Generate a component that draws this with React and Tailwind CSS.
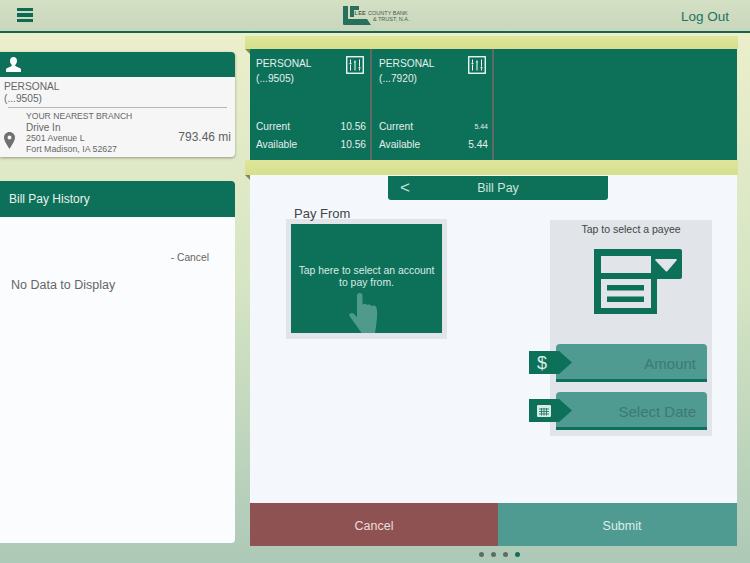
import React from 'react';

const sans = 'font-["Liberation_Sans",Arial,sans-serif]';

function FilterIcon() {
  return (
    <svg width="18" height="18" viewBox="0 0 18 18" fill="none" stroke="white">
      <rect x="0.75" y="0.75" width="16.5" height="16.5" strokeWidth="1.3" />
      <path d="M4.5 3.5v3M4.5 9v5.5M9 6.5v8M13.5 3.5v7M13.5 13v1.5" strokeWidth="1" />
      <circle cx="4.5" cy="7.6" r="1" fill="white" stroke="none" />
      <path d="M7.8 6.5 9 4l1.2 2.5z" fill="white" stroke="none" />
      <circle cx="13.5" cy="11.7" r="1" fill="white" stroke="none" />
    </svg>
  );
}

function AccountTile({ name, number, current, currentClass, available, className }) {
  return (
    <div className={`w-[122px] h-full border-r-2 border-[#5d6a66] flex flex-col pr-[4px] text-[#e4efeb] text-[10.2px] leading-[15px] ${className}`}>
      <div className="flex justify-between pt-[7px] pr-[2px] h-[76px]">
        <div>
          <div>{name}</div>
          <div>{number}</div>
        </div>
        <div><FilterIcon /></div>
      </div>
      <div className="flex justify-between items-center h-[18px] mt-[-8px]">
        <span>Current</span>
        <span className={currentClass}>{current}</span>
      </div>
      <div className="flex justify-between items-center h-[18px]">
        <span>Available</span>
        <span>{available}</span>
      </div>
    </div>
  );
}

function Band({ className }) {
  return (
    <div className={`relative bg-gradient-to-b from-[#dfe59b] to-[#d6e08c] ${className}`}>
      <div className="absolute left-0 top-full w-0 h-0 border-t-[5px] border-l-[5px] border-t-[#7d8a50] border-l-transparent" />
    </div>
  );
}

function FieldRow({ label, icon }) {
  return (
    <div className="flex items-center relative h-[39px] ml-[1px]">
      <div className="absolute z-10 left-[-27px] top-[8px] w-[43px] h-[23px] bg-[#0d7059] flex items-center pl-[8px] [clip-path:polygon(0_0,70%_0,100%_50%,70%_100%,0_100%)]">
        {icon}
      </div>
      <div className="relative w-[151px] h-[38px] bg-[#4f9a91] rounded-t-[4px] border-b-[3px] border-[#0d7059] flex items-center justify-end pr-[11px] pt-[7px] text-[15px] text-[#3c7a72]">
        {label}
      </div>
    </div>
  );
}

export default function App() {
  return (
    <div className={`w-[750px] h-[563px] overflow-hidden flex flex-col bg-gradient-to-b from-[#eef0cc] via-[#d6e5c4] to-[#adc9b7] ${sans}`}>
      {/* header */}
      <header className="h-[33px] shrink-0 border-b-2 border-[#17644f] bg-gradient-to-b from-[#d4e0c4] to-[#c8d6bb] flex items-center justify-between pl-[17px] pr-[21px]">
        <div className="w-[16px] flex flex-col gap-[2px] mt-[-1px]">
          <div className="h-[3.5px] bg-[#0d6a55]" />
          <div className="h-[3.5px] bg-[#0d6a55]" />
          <div className="h-[3.5px] bg-[#0d6a55]" />
        </div>
        <div className="relative w-[67px] h-[19px] ml-[38px] mt-[-1px]">
          <svg width="30" height="19" viewBox="0 0 30 19">
            <path d="M1 0h5v13h19l4 6H2q-1 0-1-1z" fill="#27705d" />
            <path d="M8 0h9v4H12v7H8z" fill="#27705d" />
          </svg>
          <div className="absolute left-[12px] top-[4px] text-[5.5px] leading-[7px] text-[#4a5a50] whitespace-nowrap">
            <span className="font-bold tracking-[0.3px]">LEE</span>
            <span className="ml-[2px]">COUNTY BANK</span>
          </div>
          <div className="absolute right-0 top-[10px] text-[5.5px] leading-[7px] text-[#4a5a50] whitespace-nowrap">&amp; TRUST, N.A.</div>
        </div>
        <span className="text-[13.5px] text-[#1c7560] mt-[3px]">Log Out</span>
      </header>

      <div className="flex flex-1 min-h-0">
        {/* left column */}
        <aside className="w-[235px] shrink-0 pt-[19px] flex flex-col">
          <div className="h-[105px] rounded-r-[4px] bg-[#f6f6f7] shadow-[0_1px_3px_rgba(0,0,0,0.35)] overflow-hidden text-[#666]">
            <div className="h-[25px] bg-[#0d7059] flex items-center pl-[6px]">
              <svg width="15" height="15" viewBox="0 0 15 15" fill="white">
                <path d="M7.5 0c2.4 0 3.6 1.8 3.5 4-.1 1.6-.8 3-1.6 3.8-.4.5-.2 1.2.4 1.5l3.8 1.7c.9.4 1.400 1 1.400 2V15H0v-2c0-1 .5-1.600 1.400-2l3.800-1.700c.6-.3.8-1 .4-1.500C4.800 7 4.100 5.600 4 4c-.1-2.200 1.100-4 3.500-4z" />
              </svg>
            </div>
            <div className="pl-[4px] pt-[4px] text-[10.2px] leading-[11.5px]">
              <div>PERSONAL</div>
              <div>(...9505)</div>
            </div>
            <div className="h-px bg-[#b5b5b5] ml-[8px] mr-[8px] mt-[3px]" />
            <div className="flex items-center pl-[4px] pr-[4px]">
              <svg width="11" height="17" viewBox="0 0 11 17" className="mt-[17px]">
                <path fillRule="evenodd" d="M5.5 0C8.5 0 11 2.4 11 5.5 11 9 7.5 13.500 5.500 17 3.500 13.500 0 9 0 5.500 0 2.400 2.500 0 5.500 0zm0 3.500a2 2 0 1 0 0 4 2 2 0 0 0 0-4z" fill="#707070" />
              </svg>
              <div className="ml-[11px] flex-1 pt-[3px]">
                <div className="text-[8.6px] leading-[11px]">YOUR NEAREST BRANCH</div>
                <div className="text-[10px] leading-[11px]">Drive In</div>
                <div className="text-[8.8px] leading-[11px]">2501 Avenue L</div>
                <div className="text-[8.8px] leading-[11px]">Fort Madison, IA 52627</div>
              </div>
              <div className="text-[12px] mt-[10px] text-[#5f5f5f]">793.46 mi</div>
            </div>
          </div>

          <div className="mt-[24px] h-[362px] rounded-r-[4px] bg-[#fbfcfd] overflow-hidden">
            <div className="h-[36px] bg-[#0d7059] flex items-center pl-[9px] text-[12px] text-[#e9f2ef]">
              Bill Pay History
            </div>
            <div className="pt-[34px] pr-[26px] text-right text-[10.3px] leading-[13px] text-[#666]">- Cancel</div>
            <div className="pl-[11px] pt-[14px] text-[12.5px] leading-[15px] text-[#666]">No Data to Display</div>
          </div>
        </aside>

        {/* right column */}
        <main className="ml-[10px] w-[493px] pt-[3px] flex flex-col">
          <Band className="h-[13px]" />
          <div className="ml-[5px] w-[487px] h-[111px] bg-[#0d7059] flex">
            <AccountTile className="pl-[6px]" name="PERSONAL" number="(...9505)" current="10.56" available="10.56" />
            <AccountTile className="pl-[7px]" name="PERSONAL" number="(...7920)" current="5.44" currentClass="text-[7px]" available="5.44" />
          </div>
          <Band className="h-[15px]" />
          <div className="ml-[5px] w-[487px] h-[328px] bg-[#f4f8fc] flex flex-col">
            <div className="ml-[138px] mt-[1px] w-[220px] h-[24px] bg-[#0d7059] rounded-b-[3px] flex items-center text-[#cfe4de] text-[12.5px]">
              <span className="pl-[12px] w-[40px] text-[17px] font-light">&lt;</span>
              <span className="flex-1 text-center pr-[40px]">Bill Pay</span>
            </div>
            <div className="w-full flex justify-between">
              <div className="ml-[36px]">
                <div className="text-[13px] leading-[14px] text-[#444] pl-[8px] mt-[7px] mb-[-2px]">Pay From</div>
                <div className="w-[161px] h-[120px] bg-[#e1e4e8] p-[5px]">
                  <div className="h-[109px] overflow-hidden bg-[#0d7059] flex flex-col items-center text-center text-[10.4px] leading-[12px] text-[#d9ebe5] pt-[41px] whitespace-nowrap">
                    <div>Tap here to select an account</div>
                    <div>to pay from.</div>
                    <svg width="34" height="41" viewBox="0 0 34 41" fill="#4f9a8b" className="mt-[4px] shrink-0 ml-[-2px]">
                      <path d="M8 2.5c0-3.3 5.5-3.3 5.5 0v9c1.5-1 3.5-1 4.5.5 1.5-.8 3.5-.6 4.5 1 1.5-.8 4-.8 5 1.5 1.5 7 0 15-1.5 26H13L.5 23c-1.2-2.5 2-4 4-2.5L8 24z" />
                    </svg>
                  </div>
                </div>
              </div>
              <div className="mt-[20px] mr-[25px] w-[162px] h-[216px] bg-[#e1e4e8] flex flex-col pl-[5px]">
                <div className="text-center text-[10.5px] leading-[12px] text-[#444] pt-[3px] pr-[5px]">Tap to select a payee</div>
                <svg width="88" height="65" viewBox="0 0 88 65" className="ml-[39px] mt-[14px] shrink-0">
                  <path d="M0 0h86a2 2 0 0 1 2 2v26a2 2 0 0 1-2 2H63v35H0z" fill="#0d7059" />
                  <rect x="7" y="7" width="50" height="17" fill="#e1e4e8" />
                  <rect x="7" y="30" width="50" height="29" fill="#e1e4e8" />
                  <rect x="13" y="36" width="37" height="5.5" fill="#0d7059" />
                  <rect x="13" y="47.5" width="37" height="5.5" fill="#0d7059" />
                  <path d="M62 10h20q1.5 0 .5 1.5L73.500 22q-1 1-2 0L61.500 11.500Q60.500 10 62 10z" fill="#e1e4e8" />
                </svg>
                <div className="mt-[29px] flex flex-col gap-[9px]">
                  <FieldRow label="Amount" icon={<span className="text-[#d9ebe5] text-[18px] leading-none">$</span>} />
                  <FieldRow
                    label="Select Date"
                    icon={
                      <svg width="14" height="13" viewBox="0 0 14 13">
                        <rect x="0" y="1" width="14" height="12" rx="1" fill="#d9ebe5" />
                        <path d="M2 5h10M2 7.5h10M2 10h10M4.5 4v7.5M7 4v7.5M9.5 4v7.5" stroke="#0d7059" strokeWidth="0.8" />
                      </svg>
                    }
                  />
                </div>
              </div>
            </div>
          </div>
          <div className="ml-[5px] w-[487px] h-[43px] flex text-[12.5px]">
            <div className="w-[248px] bg-[#8f5253] flex items-center justify-center pt-[3px] text-[#ecdcdc]">Cancel</div>
            <div className="flex-1 bg-[#4f9a91] flex items-center justify-center pt-[3px] pl-[9px] text-[#dcefeb]">Submit</div>
          </div>
          <div className="flex justify-center gap-[7px] mt-[6px] ml-[15px]">
            <span className="w-[5px] h-[5px] rounded-full bg-[#5a6d66]" />
            <span className="w-[5px] h-[5px] rounded-full bg-[#5a6d66]" />
            <span className="w-[5px] h-[5px] rounded-full bg-[#5a6d66]" />
            <span className="w-[5px] h-[5px] rounded-full bg-[#0d7059]" />
          </div>
        </main>
      </div>
    </div>
  );
}
